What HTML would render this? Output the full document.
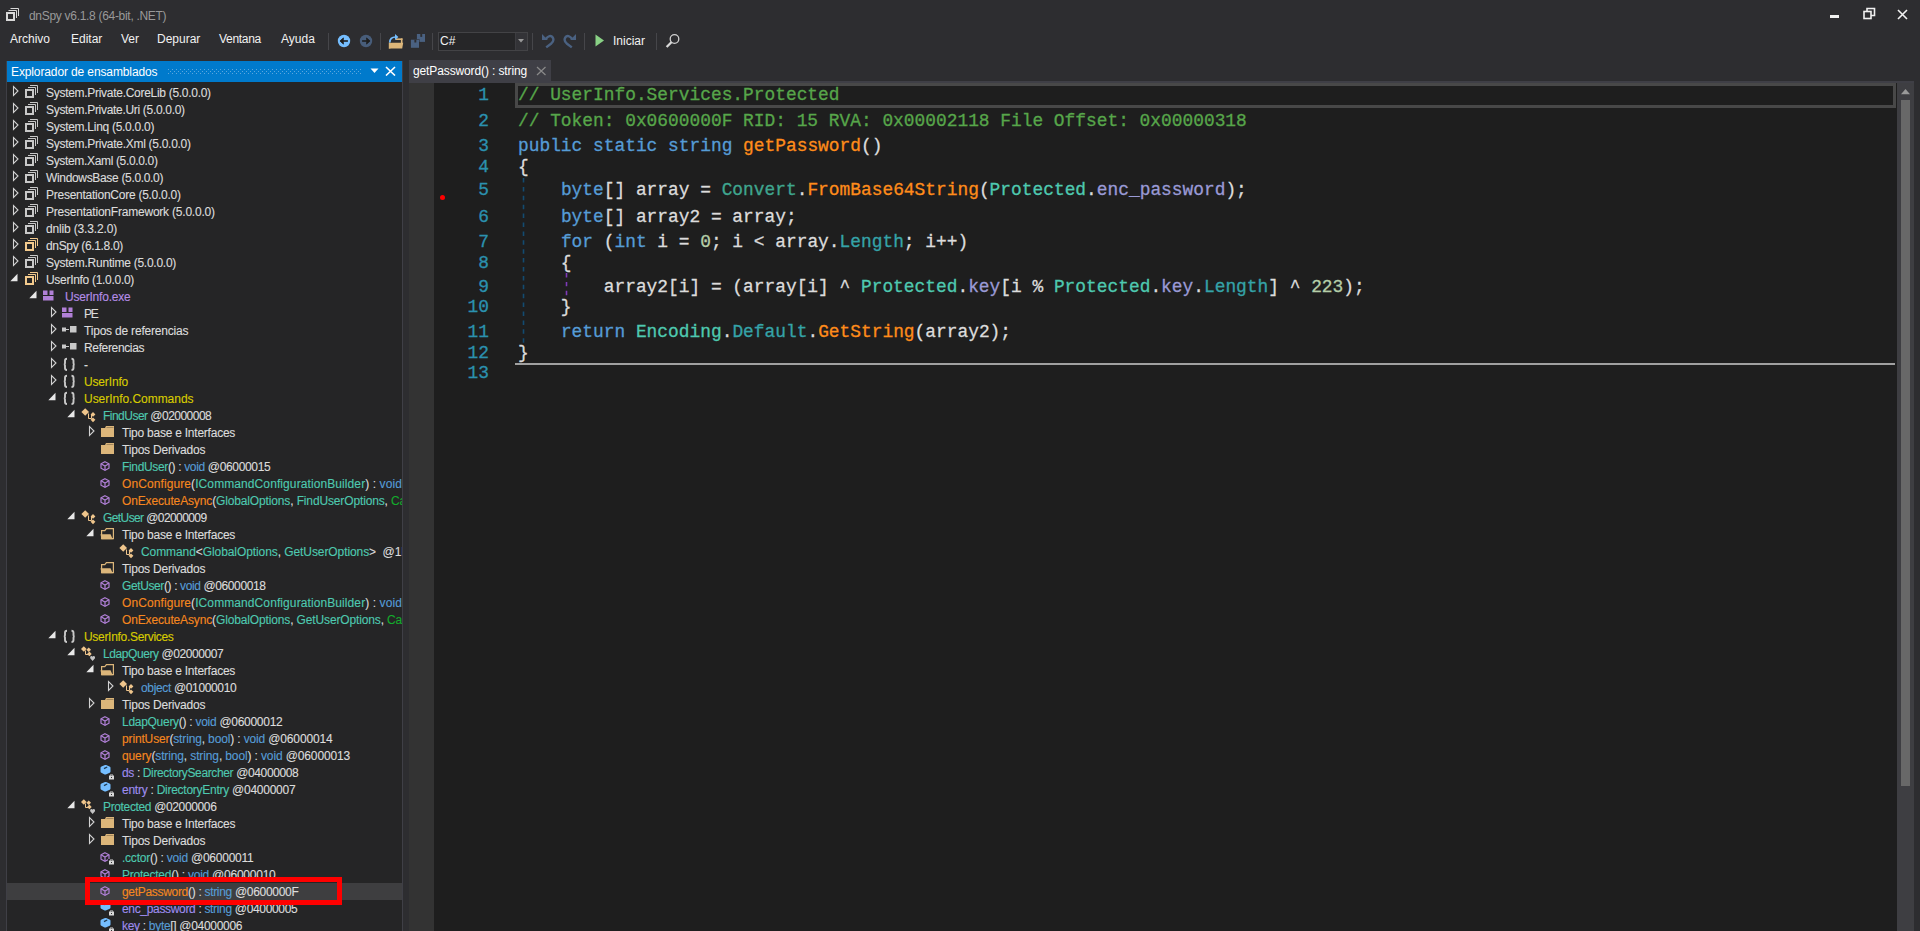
<!DOCTYPE html>
<html><head><meta charset="utf-8"><style>
*{margin:0;padding:0;box-sizing:border-box}
html,body{width:1920px;height:931px;overflow:hidden;background:#2d2d30;font-family:"Liberation Sans",sans-serif;font-size:12px;color:#f1f1f1}
.a{position:absolute}
.ic{position:absolute;top:0}
.row{position:absolute;left:7px;width:395px;height:17px;overflow:hidden}
.row.sel{background:#3e3e40}
.tt{position:absolute;top:0;-webkit-text-stroke:0.12px currentColor;line-height:17px;white-space:pre;padding-top:1px}
.ns{position:absolute;top:0;line-height:17px;color:#c8c8c8;font-size:12px;font-weight:bold;letter-spacing:1px}
.cl{position:absolute;left:518px;-webkit-text-stroke:0.3px currentColor;font-family:"Liberation Mono",monospace;font-size:17.87px;line-height:20px;white-space:pre;color:#dcdcdc}
.ln{position:absolute;-webkit-text-stroke:0.3px currentColor;left:440px;width:49px;text-align:right;font-family:"Liberation Mono",monospace;font-size:17.87px;line-height:20px;color:#2b91af}
.menu span{position:absolute;top:31px;line-height:16px;color:#f1f1f1}
.sep{position:absolute;top:33px;width:1px;height:17px;background:#46464a}
</style></head><body>
<!-- title bar -->
<svg class="a" style="left:5px;top:7px" width="15" height="15"><rect x="2" y="6" width="7" height="7" fill="none" stroke="#d8d8d8" stroke-width="2"/><path d="M3.5 3.5 H11.5 V11" fill="none" stroke="#d8d8d8" stroke-width="1"/><path d="M5.5 1.5 H13.5 V9" fill="none" stroke="#d8d8d8" stroke-width="1"/></svg>
<div class="a" style="left:29px;top:8px;line-height:16px;color:#999999;letter-spacing:-0.3px">dnSpy v6.1.8 (64-bit, .NET)</div>
<div class="a" style="left:1830px;top:15px;width:9px;height:3px;background:#f1f1f1"></div>
<svg class="a" style="left:1863px;top:7px" width="13" height="13"><rect x="1" y="4.5" width="7" height="7" fill="none" stroke="#f1f1f1" stroke-width="1.6"/><path d="M4 4.5 V1.5 H11.5 V8.5 H8" fill="none" stroke="#f1f1f1" stroke-width="1.6"/></svg>
<svg class="a" style="left:1897px;top:9px" width="12" height="11"><path d="M1 1 L10 10 M10 1 L1 10" stroke="#f1f1f1" stroke-width="1.6"/></svg>
<!-- menu -->
<div class="menu">
<span style="left:10px">Archivo</span><span style="left:71px">Editar</span><span style="left:121px">Ver</span><span style="left:157px">Depurar</span><span style="left:219px;letter-spacing:-0.3px">Ventana</span><span style="left:281px">Ayuda</span>
</div>
<div class="sep" style="left:328px"></div>
<svg class="a" style="left:337px;top:34px" width="14" height="14"><circle cx="7" cy="7" r="6.2" fill="#75beff"/><path d="M2.8 7 L6.6 3.5 V5.2 L5 7 L6.6 8.8 V10.5 Z" fill="#1e1e1e"/><path d="M2.8 7 L6.6 3.5 V10.5 Z" fill="#1e1e1e"/><rect x="5.5" y="6.2" width="5.4" height="1.6" fill="#1e1e1e"/></svg>
<svg class="a" style="left:359px;top:34px" width="14" height="14"><circle cx="7" cy="7" r="6.2" fill="#485d7a"/><g transform="translate(14,0) scale(-1,1)"><path d="M2.8 7 L6.6 3.5 V5.2 L5 7 L6.6 8.8 V10.5 Z" fill="#1e1e1e"/><path d="M2.8 7 L6.6 3.5 V10.5 Z" fill="#1e1e1e"/><rect x="5.5" y="6.2" width="5.4" height="1.6" fill="#1e1e1e"/></g></svg>
<div class="sep" style="left:380px"></div>
<svg class="a" style="left:388px;top:34px" width="17" height="16"><rect x="7.5" y="4.4" width="7" height="1.6" fill="#dcb67a"/><rect x="12.9" y="4.4" width="1.6" height="5" fill="#dcb67a"/><rect x="0.8" y="7.5" width="1.6" height="7" fill="#dcb67a"/><path d="M2.2 8.8 H15.2 L14.2 14.4 H0.8 Z" fill="#dcb67a"/><path d="M1.8 8.6 Q1.8 3 7.6 3" fill="none" stroke="#2d2d30" stroke-width="3.2"/><path d="M1.8 8.6 Q1.8 3 7.6 3" fill="none" stroke="#75beff" stroke-width="1.7"/><path d="M7 0 L10.4 3 L7 6 Z" fill="#75beff"/></svg>
<svg class="a" style="left:410px;top:33px" width="17" height="17"><path d="M6.9 1 H15 V8.9 H6.9 Z" fill="#4a6181"/><rect x="10.3" y="1" width="1.9" height="2.9" fill="#2d2d30"/><path d="M0.4 6.2 H9.5 V15.3 H0.4 Z" fill="#2d2d30"/><path d="M0.9 6.7 H9 V14.8 H0.9 Z" fill="#4a6181"/><rect x="4.4" y="6.7" width="1.9" height="2.8" fill="#2d2d30"/></svg>
<div class="sep" style="left:432px"></div>
<div class="a" style="left:438px;top:32px;width:90px;height:19px;border:1px solid #434346;background:#262628"></div>
<div class="a" style="left:515px;top:33px;width:12px;height:17px;background:#333337;border-left:1px solid #3c3c40"></div>
<svg class="a" style="left:518px;top:39px" width="8" height="5"><path d="M0 0 H6 L3 3.5 Z" fill="#999"/></svg>
<div class="a" style="left:440px;top:33px;line-height:16px;color:#f1f1f1">C#</div>
<div class="sep" style="left:532px"></div>
<svg class="a" style="left:540px;top:33px" width="16" height="16"><path d="M5.8 6 C8 3 11 1.8 12.7 4.5 C13.9 6.5 13.2 9 11 10.8 L6.2 14.4" fill="none" stroke="#4a6181" stroke-width="2.4"/><path d="M2 1.1 V6.9 H7.8 Z" fill="#4a6181"/></svg>
<svg class="a" style="left:562px;top:33px" width="16" height="16"><g transform="translate(16,0) scale(-1,1)"><path d="M5.8 6 C8 3 11 1.8 12.7 4.5 C13.9 6.5 13.2 9 11 10.8 L6.2 14.4" fill="none" stroke="#4a6181" stroke-width="2.4"/><path d="M2 1.1 V6.9 H7.8 Z" fill="#4a6181"/></g></svg>
<div class="sep" style="left:584px"></div>
<svg class="a" style="left:595px;top:34px" width="10" height="13"><path d="M0.5 0.5 V12.5 L9 6.5 Z" fill="#89d185"/></svg>
<div class="a" style="left:613px;top:33px;line-height:16px;color:#f1f1f1">Iniciar</div>
<div class="sep" style="left:656px"></div>
<svg class="a" style="left:665px;top:33px" width="16" height="16"><circle cx="9.5" cy="6" r="4.3" fill="none" stroke="#d0d0d0" stroke-width="1.3"/><path d="M6.6 9 L1.6 14" stroke="#d8d8d8" stroke-width="2.3"/></svg>

<!-- left panel -->
<div class="a" style="left:6px;top:61px;width:1px;height:870px;background:#3f3f46"></div>
<div class="a" style="left:7px;top:61px;width:395px;height:870px;background:#252526"></div>
<div class="a" style="left:402px;top:61px;width:1px;height:870px;background:#3f3f46"></div>
<div class="a" style="left:7px;top:61px;width:395px;height:21px;background:#007acc"></div>
<div class="a" style="left:11px;top:64px;line-height:16px;color:#ffffff;letter-spacing:-0.12px">Explorador de ensamblados</div>
<svg class="a" style="left:168px;top:69px" width="194" height="5"><defs><pattern id="grip" width="4" height="4" patternUnits="userSpaceOnUse"><rect x="0" y="0" width="1" height="1" fill="#5aa6de"/><rect x="2" y="2" width="1" height="1" fill="#5aa6de"/></pattern></defs><rect width="194" height="5" fill="url(#grip)"/></svg>
<svg class="a" style="left:370px;top:68px" width="10" height="6"><path d="M0.5 0.5 H8.5 L4.5 5 Z" fill="#ffffff"/></svg>
<svg class="a" style="left:385px;top:66px" width="11" height="10"><path d="M1 1 L10 9.5 M10 1 L1 9.5" stroke="#ffffff" stroke-width="1.6"/></svg>
<div class="row" style="top:84px"><svg class="ic" style="left:5px" width="8" height="17"><path d="M1.5 2.5 L1.5 11.5 L6 7 Z" fill="none" stroke="#d2d2d2" stroke-width="1.1"/></svg><svg class="ic" style="left:17px" width="15" height="17"><rect x="2" y="6" width="7" height="7" fill="none" stroke="#c8c8c8" stroke-width="2"/><path d="M4 3.5 H11.5 V11" fill="none" stroke="#c8c8c8" stroke-width="1"/><path d="M6 1.5 H13.5 V9" fill="none" stroke="#c8c8c8" stroke-width="1"/></svg><span class="tt" style="left:39px;letter-spacing:-0.290px"><span style="color:#dcdcdc">System.Private.CoreLib (5.0.0.0)</span></span></div><div class="row" style="top:101px"><svg class="ic" style="left:5px" width="8" height="17"><path d="M1.5 2.5 L1.5 11.5 L6 7 Z" fill="none" stroke="#d2d2d2" stroke-width="1.1"/></svg><svg class="ic" style="left:17px" width="15" height="17"><rect x="2" y="6" width="7" height="7" fill="none" stroke="#c8c8c8" stroke-width="2"/><path d="M4 3.5 H11.5 V11" fill="none" stroke="#c8c8c8" stroke-width="1"/><path d="M6 1.5 H13.5 V9" fill="none" stroke="#c8c8c8" stroke-width="1"/></svg><span class="tt" style="left:39px;letter-spacing:-0.306px"><span style="color:#dcdcdc">System.Private.Uri (5.0.0.0)</span></span></div><div class="row" style="top:118px"><svg class="ic" style="left:5px" width="8" height="17"><path d="M1.5 2.5 L1.5 11.5 L6 7 Z" fill="none" stroke="#d2d2d2" stroke-width="1.1"/></svg><svg class="ic" style="left:17px" width="15" height="17"><rect x="2" y="6" width="7" height="7" fill="none" stroke="#c8c8c8" stroke-width="2"/><path d="M4 3.5 H11.5 V11" fill="none" stroke="#c8c8c8" stroke-width="1"/><path d="M6 1.5 H13.5 V9" fill="none" stroke="#c8c8c8" stroke-width="1"/></svg><span class="tt" style="left:39px;letter-spacing:-0.284px"><span style="color:#dcdcdc">System.Linq (5.0.0.0)</span></span></div><div class="row" style="top:135px"><svg class="ic" style="left:5px" width="8" height="17"><path d="M1.5 2.5 L1.5 11.5 L6 7 Z" fill="none" stroke="#d2d2d2" stroke-width="1.1"/></svg><svg class="ic" style="left:17px" width="15" height="17"><rect x="2" y="6" width="7" height="7" fill="none" stroke="#c8c8c8" stroke-width="2"/><path d="M4 3.5 H11.5 V11" fill="none" stroke="#c8c8c8" stroke-width="1"/><path d="M6 1.5 H13.5 V9" fill="none" stroke="#c8c8c8" stroke-width="1"/></svg><span class="tt" style="left:39px;letter-spacing:-0.286px"><span style="color:#dcdcdc">System.Private.Xml (5.0.0.0)</span></span></div><div class="row" style="top:152px"><svg class="ic" style="left:5px" width="8" height="17"><path d="M1.5 2.5 L1.5 11.5 L6 7 Z" fill="none" stroke="#d2d2d2" stroke-width="1.1"/></svg><svg class="ic" style="left:17px" width="15" height="17"><rect x="2" y="6" width="7" height="7" fill="none" stroke="#c8c8c8" stroke-width="2"/><path d="M4 3.5 H11.5 V11" fill="none" stroke="#c8c8c8" stroke-width="1"/><path d="M6 1.5 H13.5 V9" fill="none" stroke="#c8c8c8" stroke-width="1"/></svg><span class="tt" style="left:39px;letter-spacing:-0.339px"><span style="color:#dcdcdc">System.Xaml (5.0.0.0)</span></span></div><div class="row" style="top:169px"><svg class="ic" style="left:5px" width="8" height="17"><path d="M1.5 2.5 L1.5 11.5 L6 7 Z" fill="none" stroke="#d2d2d2" stroke-width="1.1"/></svg><svg class="ic" style="left:17px" width="15" height="17"><rect x="2" y="6" width="7" height="7" fill="none" stroke="#c8c8c8" stroke-width="2"/><path d="M4 3.5 H11.5 V11" fill="none" stroke="#c8c8c8" stroke-width="1"/><path d="M6 1.5 H13.5 V9" fill="none" stroke="#c8c8c8" stroke-width="1"/></svg><span class="tt" style="left:39px;letter-spacing:-0.332px"><span style="color:#dcdcdc">WindowsBase (5.0.0.0)</span></span></div><div class="row" style="top:186px"><svg class="ic" style="left:5px" width="8" height="17"><path d="M1.5 2.5 L1.5 11.5 L6 7 Z" fill="none" stroke="#d2d2d2" stroke-width="1.1"/></svg><svg class="ic" style="left:17px" width="15" height="17"><rect x="2" y="6" width="7" height="7" fill="none" stroke="#c8c8c8" stroke-width="2"/><path d="M4 3.5 H11.5 V11" fill="none" stroke="#c8c8c8" stroke-width="1"/><path d="M6 1.5 H13.5 V9" fill="none" stroke="#c8c8c8" stroke-width="1"/></svg><span class="tt" style="left:39px;letter-spacing:-0.255px"><span style="color:#dcdcdc">PresentationCore (5.0.0.0)</span></span></div><div class="row" style="top:203px"><svg class="ic" style="left:5px" width="8" height="17"><path d="M1.5 2.5 L1.5 11.5 L6 7 Z" fill="none" stroke="#d2d2d2" stroke-width="1.1"/></svg><svg class="ic" style="left:17px" width="15" height="17"><rect x="2" y="6" width="7" height="7" fill="none" stroke="#c8c8c8" stroke-width="2"/><path d="M4 3.5 H11.5 V11" fill="none" stroke="#c8c8c8" stroke-width="1"/><path d="M6 1.5 H13.5 V9" fill="none" stroke="#c8c8c8" stroke-width="1"/></svg><span class="tt" style="left:39px;letter-spacing:-0.213px"><span style="color:#dcdcdc">PresentationFramework (5.0.0.0)</span></span></div><div class="row" style="top:220px"><svg class="ic" style="left:5px" width="8" height="17"><path d="M1.5 2.5 L1.5 11.5 L6 7 Z" fill="none" stroke="#d2d2d2" stroke-width="1.1"/></svg><svg class="ic" style="left:17px" width="15" height="17"><rect x="2" y="6" width="7" height="7" fill="none" stroke="#c8c8c8" stroke-width="2"/><path d="M4 3.5 H11.5 V11" fill="none" stroke="#c8c8c8" stroke-width="1"/><path d="M6 1.5 H13.5 V9" fill="none" stroke="#c8c8c8" stroke-width="1"/></svg><span class="tt" style="left:39px;letter-spacing:-0.159px"><span style="color:#dcdcdc">dnlib (3.3.2.0)</span></span></div><div class="row" style="top:237px"><svg class="ic" style="left:5px" width="8" height="17"><path d="M1.5 2.5 L1.5 11.5 L6 7 Z" fill="none" stroke="#d2d2d2" stroke-width="1.1"/></svg><svg class="ic" style="left:17px" width="15" height="17"><rect x="2" y="6" width="7" height="7" fill="none" stroke="#f2c98c" stroke-width="2"/><path d="M4 3.5 H11.5 V11" fill="none" stroke="#f2c98c" stroke-width="1"/><path d="M6 1.5 H13.5 V9" fill="none" stroke="#f2c98c" stroke-width="1"/></svg><span class="tt" style="left:39px;letter-spacing:-0.344px"><span style="color:#dcdcdc">dnSpy (6.1.8.0)</span></span></div><div class="row" style="top:254px"><svg class="ic" style="left:5px" width="8" height="17"><path d="M1.5 2.5 L1.5 11.5 L6 7 Z" fill="none" stroke="#d2d2d2" stroke-width="1.1"/></svg><svg class="ic" style="left:17px" width="15" height="17"><rect x="2" y="6" width="7" height="7" fill="none" stroke="#c8c8c8" stroke-width="2"/><path d="M4 3.5 H11.5 V11" fill="none" stroke="#c8c8c8" stroke-width="1"/><path d="M6 1.5 H13.5 V9" fill="none" stroke="#c8c8c8" stroke-width="1"/></svg><span class="tt" style="left:39px;letter-spacing:-0.248px"><span style="color:#dcdcdc">System.Runtime (5.0.0.0)</span></span></div><div class="row" style="top:271px"><svg class="ic" style="left:2.5px" width="9" height="17"><path d="M0.3 10.3 L7.5 10.3 L7.5 2.8 Z" fill="#e8e8e8"/></svg><svg class="ic" style="left:17px" width="15" height="17"><rect x="2" y="6" width="7" height="7" fill="none" stroke="#f2c98c" stroke-width="2"/><path d="M4 3.5 H11.5 V11" fill="none" stroke="#f2c98c" stroke-width="1"/><path d="M6 1.5 H13.5 V9" fill="none" stroke="#f2c98c" stroke-width="1"/></svg><span class="tt" style="left:39px;letter-spacing:-0.299px"><span style="color:#dcdcdc">UserInfo (1.0.0.0)</span></span></div><div class="row" style="top:288px"><svg class="ic" style="left:21.5px" width="9" height="17"><path d="M0.3 10.3 L7.5 10.3 L7.5 2.8 Z" fill="#e8e8e8"/></svg><svg class="ic" style="left:36px" width="14" height="17"><rect x="0" y="2.5" width="4.5" height="4.5" fill="#b180d7"/><rect x="6.5" y="2.5" width="4" height="4.5" fill="#b180d7"/><rect x="0" y="8" width="10.5" height="4.5" fill="#b180d7"/></svg><span class="tt" style="left:58px;letter-spacing:-0.212px"><span style="color:#b48ce6">UserInfo.exe</span></span></div><div class="row" style="top:305px"><svg class="ic" style="left:43px" width="8" height="17"><path d="M1.5 2.5 L1.5 11.5 L6 7 Z" fill="none" stroke="#d2d2d2" stroke-width="1.1"/></svg><svg class="ic" style="left:55px" width="14" height="17"><rect x="0" y="2.5" width="4.5" height="4.5" fill="#b180d7"/><rect x="6.5" y="2.5" width="4" height="4.5" fill="#b180d7"/><rect x="0" y="8" width="10.5" height="4.5" fill="#b180d7"/></svg><span class="tt" style="left:77px;letter-spacing:-1.308px"><span style="color:#dcdcdc">PE</span></span></div><div class="row" style="top:322px"><svg class="ic" style="left:43px" width="8" height="17"><path d="M1.5 2.5 L1.5 11.5 L6 7 Z" fill="none" stroke="#d2d2d2" stroke-width="1.1"/></svg><svg class="ic" style="left:55px" width="16" height="17"><rect x="0" y="5.5" width="4" height="4" fill="#c8c8c8"/><rect x="4" y="7" width="3" height="1" fill="#c8c8c8"/><rect x="8" y="4" width="6.5" height="6.5" fill="#c8c8c8"/></svg><span class="tt" style="left:77px;letter-spacing:-0.199px"><span style="color:#dcdcdc">Tipos de referencias</span></span></div><div class="row" style="top:339px"><svg class="ic" style="left:43px" width="8" height="17"><path d="M1.5 2.5 L1.5 11.5 L6 7 Z" fill="none" stroke="#d2d2d2" stroke-width="1.1"/></svg><svg class="ic" style="left:55px" width="16" height="17"><rect x="0" y="5.5" width="4" height="4" fill="#c8c8c8"/><rect x="4" y="7" width="3" height="1" fill="#c8c8c8"/><rect x="8" y="4" width="6.5" height="6.5" fill="#c8c8c8"/></svg><span class="tt" style="left:77px;letter-spacing:-0.357px"><span style="color:#dcdcdc">Referencias</span></span></div><div class="row" style="top:356px"><svg class="ic" style="left:43px" width="8" height="17"><path d="M1.5 2.5 L1.5 11.5 L6 7 Z" fill="none" stroke="#d2d2d2" stroke-width="1.1"/></svg><svg class="ic" style="left:55px" width="16" height="17"><path d="M5 2.8 Q3 2.8 3 4.8 V7.2 Q3 8.4 1.8 8.4 Q3 8.4 3 9.6 V12 Q3 14 5 14" fill="none" stroke="#c8c8c8" stroke-width="1.9"/><path d="M9.5 2.8 Q11.5 2.8 11.5 4.8 V7.2 Q11.5 8.4 12.7 8.4 Q11.5 8.4 11.5 9.6 V12 Q11.5 14 9.5 14" fill="none" stroke="#c8c8c8" stroke-width="1.9"/></svg><span class="tt" style="left:77px;letter-spacing:0.500px"><span style="color:#dcdcdc">-</span></span></div><div class="row" style="top:373px"><svg class="ic" style="left:43px" width="8" height="17"><path d="M1.5 2.5 L1.5 11.5 L6 7 Z" fill="none" stroke="#d2d2d2" stroke-width="1.1"/></svg><svg class="ic" style="left:55px" width="16" height="17"><path d="M5 2.8 Q3 2.8 3 4.8 V7.2 Q3 8.4 1.8 8.4 Q3 8.4 3 9.6 V12 Q3 14 5 14" fill="none" stroke="#c8c8c8" stroke-width="1.9"/><path d="M9.5 2.8 Q11.5 2.8 11.5 4.8 V7.2 Q11.5 8.4 12.7 8.4 Q11.5 8.4 11.5 9.6 V12 Q11.5 14 9.5 14" fill="none" stroke="#c8c8c8" stroke-width="1.9"/></svg><span class="tt" style="left:77px;letter-spacing:-0.157px"><span style="color:#d8cc00">UserInfo</span></span></div><div class="row" style="top:390px"><svg class="ic" style="left:40.5px" width="9" height="17"><path d="M0.3 10.3 L7.5 10.3 L7.5 2.8 Z" fill="#e8e8e8"/></svg><svg class="ic" style="left:55px" width="16" height="17"><path d="M5 2.8 Q3 2.8 3 4.8 V7.2 Q3 8.4 1.8 8.4 Q3 8.4 3 9.6 V12 Q3 14 5 14" fill="none" stroke="#c8c8c8" stroke-width="1.9"/><path d="M9.5 2.8 Q11.5 2.8 11.5 4.8 V7.2 Q11.5 8.4 12.7 8.4 Q11.5 8.4 11.5 9.6 V12 Q11.5 14 9.5 14" fill="none" stroke="#c8c8c8" stroke-width="1.9"/></svg><span class="tt" style="left:77px;letter-spacing:-0.032px"><span style="color:#d8cc00">UserInfo.Commands</span></span></div><div class="row" style="top:407px"><svg class="ic" style="left:59.5px" width="9" height="17"><path d="M0.3 10.3 L7.5 10.3 L7.5 2.8 Z" fill="#e8e8e8"/></svg><svg class="ic" style="left:74px" width="16" height="17"><path d="M4.2 1.2 L8 5 L4.2 8.8 L0.4 5 Z" fill="#efc58c"/><path d="M12 5 L14.4 7.4 L12 9.8 L9.6 7.4 Z" fill="#efc58c"/><path d="M12 10.4 L14.4 12.8 L12 15.2 L9.6 12.8 Z" fill="#efc58c"/><path d="M7.5 6.5 V11.5 H10.5 V7.5" fill="none" stroke="#efc58c" stroke-width="1"/></svg><span class="tt" style="left:96px;letter-spacing:-0.522px"><span style="color:#4ec9b0">FindUser</span><span style="color:#dcdcdc"> @02000008</span></span></div><div class="row" style="top:424px"><svg class="ic" style="left:81px" width="8" height="17"><path d="M1.5 2.5 L1.5 11.5 L6 7 Z" fill="none" stroke="#d2d2d2" stroke-width="1.1"/></svg><svg class="ic" style="left:93px" width="15" height="17"><path d="M1 4 H5 L6 2 H14 V13 H1 Z" fill="#dcb67a"/><rect x="6.5" y="3" width="7" height="1" fill="#3a3226" opacity="0.35"/></svg><span class="tt" style="left:115px;letter-spacing:-0.236px"><span style="color:#dcdcdc">Tipo base e Interfaces</span></span></div><div class="row" style="top:441px"><svg class="ic" style="left:93px" width="15" height="17"><path d="M1 4 H5 L6 2 H14 V13 H1 Z" fill="#dcb67a"/><rect x="6.5" y="3" width="7" height="1" fill="#3a3226" opacity="0.35"/></svg><span class="tt" style="left:115px;letter-spacing:-0.198px"><span style="color:#dcdcdc">Tipos Derivados</span></span></div><div class="row" style="top:458px"><svg class="ic" style="left:93px" width="16" height="17"><path d="M5 3.7 L9 5.8 V10.2 L5 12.3 L1 10.2 V5.8 Z" fill="none" stroke="#b180d7" stroke-width="1.2"/><path d="M1 5.8 L5 8 L9 5.8 M5 8 V12.3" fill="none" stroke="#b180d7" stroke-width="1.2"/></svg><span class="tt" style="left:115px;letter-spacing:-0.345px"><span style="color:#4ec9b0">FindUser</span><span style="color:#dcdcdc">() : </span><span style="color:#569cd6">void</span><span style="color:#dcdcdc"> @06000015</span></span></div><div class="row" style="top:475px"><svg class="ic" style="left:93px" width="16" height="17"><path d="M5 3.7 L9 5.8 V10.2 L5 12.3 L1 10.2 V5.8 Z" fill="none" stroke="#b180d7" stroke-width="1.2"/><path d="M1 5.8 L5 8 L9 5.8 M5 8 V12.3" fill="none" stroke="#b180d7" stroke-width="1.2"/></svg><span class="tt" style="left:115px;letter-spacing:0.094px"><span style="color:#f5871f">OnConfigure</span><span style="color:#dcdcdc">(</span><span style="color:#4ec9b0">ICommandConfigurationBuilder</span><span style="color:#dcdcdc">) : </span><span style="color:#569cd6">void</span><span style="color:#dcdcdc"> @06000016</span></span></div><div class="row" style="top:492px"><svg class="ic" style="left:93px" width="16" height="17"><path d="M5 3.7 L9 5.8 V10.2 L5 12.3 L1 10.2 V5.8 Z" fill="none" stroke="#b180d7" stroke-width="1.2"/><path d="M1 5.8 L5 8 L9 5.8 M5 8 V12.3" fill="none" stroke="#b180d7" stroke-width="1.2"/></svg><span class="tt" style="left:115px;letter-spacing:-0.138px"><span style="color:#f5871f">OnExecuteAsync</span><span style="color:#dcdcdc">(</span><span style="color:#4ec9b0">GlobalOptions</span><span style="color:#dcdcdc">, </span><span style="color:#4ec9b0">FindUserOptions</span><span style="color:#dcdcdc">, </span><span style="color:#14ab2c">CancellationToken</span><span style="color:#dcdcdc">) : </span></span></div><div class="row" style="top:509px"><svg class="ic" style="left:59.5px" width="9" height="17"><path d="M0.3 10.3 L7.5 10.3 L7.5 2.8 Z" fill="#e8e8e8"/></svg><svg class="ic" style="left:74px" width="16" height="17"><path d="M4.2 1.2 L8 5 L4.2 8.8 L0.4 5 Z" fill="#efc58c"/><path d="M12 5 L14.4 7.4 L12 9.8 L9.6 7.4 Z" fill="#efc58c"/><path d="M12 10.4 L14.4 12.8 L12 15.2 L9.6 12.8 Z" fill="#efc58c"/><path d="M7.5 6.5 V11.5 H10.5 V7.5" fill="none" stroke="#efc58c" stroke-width="1"/></svg><span class="tt" style="left:96px;letter-spacing:-0.594px"><span style="color:#4ec9b0">GetUser</span><span style="color:#dcdcdc"> @02000009</span></span></div><div class="row" style="top:526px"><svg class="ic" style="left:78.5px" width="9" height="17"><path d="M0.3 10.3 L7.5 10.3 L7.5 2.8 Z" fill="#e8e8e8"/></svg><svg class="ic" style="left:93px" width="15" height="17"><path d="M1.6 12.6 V4.6 H4.8 L6.4 2.6 H13.4 V12.6 Z" fill="none" stroke="#dcb67a" stroke-width="1.2"/><path d="M0.5 8.3 H10.5 L12.8 13.2 H1.6 Z" fill="#dcb67a"/></svg><span class="tt" style="left:115px;letter-spacing:-0.236px"><span style="color:#dcdcdc">Tipo base e Interfaces</span></span></div><div class="row" style="top:543px"><svg class="ic" style="left:112px" width="16" height="17"><path d="M4.2 1.2 L8 5 L4.2 8.8 L0.4 5 Z" fill="#efc58c"/><path d="M12 5 L14.4 7.4 L12 9.8 L9.6 7.4 Z" fill="#efc58c"/><path d="M12 10.4 L14.4 12.8 L12 15.2 L9.6 12.8 Z" fill="#efc58c"/><path d="M7.5 6.5 V11.5 H10.5 V7.5" fill="none" stroke="#efc58c" stroke-width="1"/></svg><span class="tt" style="left:134px;letter-spacing:-0.082px"><span style="color:#4ec9b0">Command</span><span style="color:#dcdcdc">&lt;</span><span style="color:#4ec9b0">GlobalOptions</span><span style="color:#dcdcdc">, </span><span style="color:#4ec9b0">GetUserOptions</span><span style="color:#dcdcdc">&gt;</span><span style="color:#dcdcdc">  @1E000001</span></span></div><div class="row" style="top:560px"><svg class="ic" style="left:93px" width="15" height="17"><path d="M1.6 12.6 V4.6 H4.8 L6.4 2.6 H13.4 V12.6 Z" fill="none" stroke="#dcb67a" stroke-width="1.2"/><path d="M0.5 8.3 H10.5 L12.8 13.2 H1.6 Z" fill="#dcb67a"/></svg><span class="tt" style="left:115px;letter-spacing:-0.198px"><span style="color:#dcdcdc">Tipos Derivados</span></span></div><div class="row" style="top:577px"><svg class="ic" style="left:93px" width="16" height="17"><path d="M5 3.7 L9 5.8 V10.2 L5 12.3 L1 10.2 V5.8 Z" fill="none" stroke="#b180d7" stroke-width="1.2"/><path d="M1 5.8 L5 8 L9 5.8 M5 8 V12.3" fill="none" stroke="#b180d7" stroke-width="1.2"/></svg><span class="tt" style="left:115px;letter-spacing:-0.389px"><span style="color:#4ec9b0">GetUser</span><span style="color:#dcdcdc">() : </span><span style="color:#569cd6">void</span><span style="color:#dcdcdc"> @06000018</span></span></div><div class="row" style="top:594px"><svg class="ic" style="left:93px" width="16" height="17"><path d="M5 3.7 L9 5.8 V10.2 L5 12.3 L1 10.2 V5.8 Z" fill="none" stroke="#b180d7" stroke-width="1.2"/><path d="M1 5.8 L5 8 L9 5.8 M5 8 V12.3" fill="none" stroke="#b180d7" stroke-width="1.2"/></svg><span class="tt" style="left:115px;letter-spacing:0.094px"><span style="color:#f5871f">OnConfigure</span><span style="color:#dcdcdc">(</span><span style="color:#4ec9b0">ICommandConfigurationBuilder</span><span style="color:#dcdcdc">) : </span><span style="color:#569cd6">void</span><span style="color:#dcdcdc"> @06000019</span></span></div><div class="row" style="top:611px"><svg class="ic" style="left:93px" width="16" height="17"><path d="M5 3.7 L9 5.8 V10.2 L5 12.3 L1 10.2 V5.8 Z" fill="none" stroke="#b180d7" stroke-width="1.2"/><path d="M1 5.8 L5 8 L9 5.8 M5 8 V12.3" fill="none" stroke="#b180d7" stroke-width="1.2"/></svg><span class="tt" style="left:115px;letter-spacing:-0.140px"><span style="color:#f5871f">OnExecuteAsync</span><span style="color:#dcdcdc">(</span><span style="color:#4ec9b0">GlobalOptions</span><span style="color:#dcdcdc">, </span><span style="color:#4ec9b0">GetUserOptions</span><span style="color:#dcdcdc">, </span><span style="color:#14ab2c">CancellationToken</span><span style="color:#dcdcdc">) : </span></span></div><div class="row" style="top:628px"><svg class="ic" style="left:40.5px" width="9" height="17"><path d="M0.3 10.3 L7.5 10.3 L7.5 2.8 Z" fill="#e8e8e8"/></svg><svg class="ic" style="left:55px" width="16" height="17"><path d="M5 2.8 Q3 2.8 3 4.8 V7.2 Q3 8.4 1.8 8.4 Q3 8.4 3 9.6 V12 Q3 14 5 14" fill="none" stroke="#c8c8c8" stroke-width="1.9"/><path d="M9.5 2.8 Q11.5 2.8 11.5 4.8 V7.2 Q11.5 8.4 12.7 8.4 Q11.5 8.4 11.5 9.6 V12 Q11.5 14 9.5 14" fill="none" stroke="#c8c8c8" stroke-width="1.9"/></svg><span class="tt" style="left:77px;letter-spacing:-0.306px"><span style="color:#d8cc00">UserInfo.Services</span></span></div><div class="row" style="top:645px"><svg class="ic" style="left:59.5px" width="9" height="17"><path d="M0.3 10.3 L7.5 10.3 L7.5 2.8 Z" fill="#e8e8e8"/></svg><svg class="ic" style="left:74px" width="16" height="17"><path d="M2.8 1.2 L5.6 4 L2.8 6.8 L0 4 Z" fill="#efc58c"/><path d="M7.7 2.4 L10 4.7 L7.7 7 L5.4 4.7 Z" fill="#efc58c"/><path d="M8.4 6.6 L10.7 8.9 L8.4 11.2 L6.1 8.9 Z" fill="#efc58c"/><path d="M4.5 5.5 V9.5 H7" fill="none" stroke="#efc58c" stroke-width="1"/><path d="M11.6 16 L9.2 13.2 Q8.6 11.2 10.3 10.9 Q11.3 10.8 11.6 11.8 Q11.9 10.8 12.9 10.9 Q14.6 11.2 14 13.2 Z" fill="#c4c4c4"/></svg><span class="tt" style="left:96px;letter-spacing:-0.420px"><span style="color:#4ec9b0">LdapQuery</span><span style="color:#dcdcdc"> @02000007</span></span></div><div class="row" style="top:662px"><svg class="ic" style="left:78.5px" width="9" height="17"><path d="M0.3 10.3 L7.5 10.3 L7.5 2.8 Z" fill="#e8e8e8"/></svg><svg class="ic" style="left:93px" width="15" height="17"><path d="M1.6 12.6 V4.6 H4.8 L6.4 2.6 H13.4 V12.6 Z" fill="none" stroke="#dcb67a" stroke-width="1.2"/><path d="M0.5 8.3 H10.5 L12.8 13.2 H1.6 Z" fill="#dcb67a"/></svg><span class="tt" style="left:115px;letter-spacing:-0.236px"><span style="color:#dcdcdc">Tipo base e Interfaces</span></span></div><div class="row" style="top:679px"><svg class="ic" style="left:100px" width="8" height="17"><path d="M1.5 2.5 L1.5 11.5 L6 7 Z" fill="none" stroke="#d2d2d2" stroke-width="1.1"/></svg><svg class="ic" style="left:112px" width="16" height="17"><path d="M4.2 1.2 L8 5 L4.2 8.8 L0.4 5 Z" fill="#efc58c"/><path d="M12 5 L14.4 7.4 L12 9.8 L9.6 7.4 Z" fill="#efc58c"/><path d="M12 10.4 L14.4 12.8 L12 15.2 L9.6 12.8 Z" fill="#efc58c"/><path d="M7.5 6.5 V11.5 H10.5 V7.5" fill="none" stroke="#efc58c" stroke-width="1"/></svg><span class="tt" style="left:134px;letter-spacing:-0.352px"><span style="color:#569cd6">object</span><span style="color:#dcdcdc"> @01000010</span></span></div><div class="row" style="top:696px"><svg class="ic" style="left:81px" width="8" height="17"><path d="M1.5 2.5 L1.5 11.5 L6 7 Z" fill="none" stroke="#d2d2d2" stroke-width="1.1"/></svg><svg class="ic" style="left:93px" width="15" height="17"><path d="M1 4 H5 L6 2 H14 V13 H1 Z" fill="#dcb67a"/><rect x="6.5" y="3" width="7" height="1" fill="#3a3226" opacity="0.35"/></svg><span class="tt" style="left:115px;letter-spacing:-0.198px"><span style="color:#dcdcdc">Tipos Derivados</span></span></div><div class="row" style="top:713px"><svg class="ic" style="left:93px" width="16" height="17"><path d="M5 3.7 L9 5.8 V10.2 L5 12.3 L1 10.2 V5.8 Z" fill="none" stroke="#b180d7" stroke-width="1.2"/><path d="M1 5.8 L5 8 L9 5.8 M5 8 V12.3" fill="none" stroke="#b180d7" stroke-width="1.2"/></svg><span class="tt" style="left:115px;letter-spacing:-0.282px"><span style="color:#4ec9b0">LdapQuery</span><span style="color:#dcdcdc">() : </span><span style="color:#569cd6">void</span><span style="color:#dcdcdc"> @06000012</span></span></div><div class="row" style="top:730px"><svg class="ic" style="left:93px" width="16" height="17"><path d="M5 3.7 L9 5.8 V10.2 L5 12.3 L1 10.2 V5.8 Z" fill="none" stroke="#b180d7" stroke-width="1.2"/><path d="M1 5.8 L5 8 L9 5.8 M5 8 V12.3" fill="none" stroke="#b180d7" stroke-width="1.2"/></svg><span class="tt" style="left:115px;letter-spacing:-0.145px"><span style="color:#f5871f">printUser</span><span style="color:#dcdcdc">(</span><span style="color:#569cd6">string</span><span style="color:#dcdcdc">, </span><span style="color:#569cd6">bool</span><span style="color:#dcdcdc">) : </span><span style="color:#569cd6">void</span><span style="color:#dcdcdc"> @06000014</span></span></div><div class="row" style="top:747px"><svg class="ic" style="left:93px" width="16" height="17"><path d="M5 3.7 L9 5.8 V10.2 L5 12.3 L1 10.2 V5.8 Z" fill="none" stroke="#b180d7" stroke-width="1.2"/><path d="M1 5.8 L5 8 L9 5.8 M5 8 V12.3" fill="none" stroke="#b180d7" stroke-width="1.2"/></svg><span class="tt" style="left:115px;letter-spacing:-0.127px"><span style="color:#f5871f">query</span><span style="color:#dcdcdc">(</span><span style="color:#569cd6">string</span><span style="color:#dcdcdc">, </span><span style="color:#569cd6">string</span><span style="color:#dcdcdc">, </span><span style="color:#569cd6">bool</span><span style="color:#dcdcdc">) : </span><span style="color:#569cd6">void</span><span style="color:#dcdcdc"> @06000013</span></span></div><div class="row" style="top:764px"><svg class="ic" style="left:93px" width="16" height="17"><path d="M0.5 4 Q0.5 3 1.5 2.6 L5 1 Q5.6 0.8 6.2 1 L9.5 2.4 Q10.5 2.8 10.5 3.8 V7.6 Q10.5 8.4 9.7 8.8 L5.8 10.4 Q5.2 10.6 4.6 10.4 L1.3 8.8 Q0.5 8.4 0.5 7.6 Z" fill="#75beff"/><path d="M4 4.6 L7.2 3" stroke="#1e3a52" stroke-width="1.3"/><rect x="8" y="10" width="7" height="7" fill="#252526"/><path d="M10 12 V11 H13 V12" fill="none" stroke="#d8d8d8" stroke-width="1"/><rect x="9" y="12" width="5" height="3.5" fill="#d8d8d8"/><rect x="11" y="13" width="1" height="1" fill="#333"/></svg><span class="tt" style="left:115px;letter-spacing:-0.372px"><span style="color:#9e8cee">ds</span><span style="color:#dcdcdc"> : </span><span style="color:#4ec9b0">DirectorySearcher</span><span style="color:#dcdcdc"> @04000008</span></span></div><div class="row" style="top:781px"><svg class="ic" style="left:93px" width="16" height="17"><path d="M0.5 4 Q0.5 3 1.5 2.6 L5 1 Q5.6 0.8 6.2 1 L9.5 2.4 Q10.5 2.8 10.5 3.8 V7.6 Q10.5 8.4 9.7 8.8 L5.8 10.4 Q5.2 10.6 4.6 10.4 L1.3 8.8 Q0.5 8.4 0.5 7.6 Z" fill="#75beff"/><path d="M4 4.6 L7.2 3" stroke="#1e3a52" stroke-width="1.3"/><rect x="8" y="10" width="7" height="7" fill="#252526"/><path d="M10 12 V11 H13 V12" fill="none" stroke="#d8d8d8" stroke-width="1"/><rect x="9" y="12" width="5" height="3.5" fill="#d8d8d8"/><rect x="11" y="13" width="1" height="1" fill="#333"/></svg><span class="tt" style="left:115px;letter-spacing:-0.260px"><span style="color:#9e8cee">entry</span><span style="color:#dcdcdc"> : </span><span style="color:#4ec9b0">DirectoryEntry</span><span style="color:#dcdcdc"> @04000007</span></span></div><div class="row" style="top:798px"><svg class="ic" style="left:59.5px" width="9" height="17"><path d="M0.3 10.3 L7.5 10.3 L7.5 2.8 Z" fill="#e8e8e8"/></svg><svg class="ic" style="left:74px" width="16" height="17"><path d="M2.8 1.2 L5.6 4 L2.8 6.8 L0 4 Z" fill="#efc58c"/><path d="M7.7 2.4 L10 4.7 L7.7 7 L5.4 4.7 Z" fill="#efc58c"/><path d="M8.4 6.6 L10.7 8.9 L8.4 11.2 L6.1 8.9 Z" fill="#efc58c"/><path d="M4.5 5.5 V9.5 H7" fill="none" stroke="#efc58c" stroke-width="1"/><path d="M11.6 16 L9.2 13.2 Q8.6 11.2 10.3 10.9 Q11.3 10.8 11.6 11.8 Q11.9 10.8 12.9 10.9 Q14.6 11.2 14 13.2 Z" fill="#c4c4c4"/></svg><span class="tt" style="left:96px;letter-spacing:-0.357px"><span style="color:#4ec9b0">Protected</span><span style="color:#dcdcdc"> @02000006</span></span></div><div class="row" style="top:815px"><svg class="ic" style="left:81px" width="8" height="17"><path d="M1.5 2.5 L1.5 11.5 L6 7 Z" fill="none" stroke="#d2d2d2" stroke-width="1.1"/></svg><svg class="ic" style="left:93px" width="15" height="17"><path d="M1 4 H5 L6 2 H14 V13 H1 Z" fill="#dcb67a"/><rect x="6.5" y="3" width="7" height="1" fill="#3a3226" opacity="0.35"/></svg><span class="tt" style="left:115px;letter-spacing:-0.227px"><span style="color:#dcdcdc">Tipo base e Interfaces</span></span></div><div class="row" style="top:832px"><svg class="ic" style="left:81px" width="8" height="17"><path d="M1.5 2.5 L1.5 11.5 L6 7 Z" fill="none" stroke="#d2d2d2" stroke-width="1.1"/></svg><svg class="ic" style="left:93px" width="15" height="17"><path d="M1 4 H5 L6 2 H14 V13 H1 Z" fill="#dcb67a"/><rect x="6.5" y="3" width="7" height="1" fill="#3a3226" opacity="0.35"/></svg><span class="tt" style="left:115px;letter-spacing:-0.198px"><span style="color:#dcdcdc">Tipos Derivados</span></span></div><div class="row" style="top:849px"><svg class="ic" style="left:93px" width="16" height="17"><path d="M5 3.7 L9 5.8 V10.2 L5 12.3 L1 10.2 V5.8 Z" fill="none" stroke="#b180d7" stroke-width="1.2"/><path d="M1 5.8 L5 8 L9 5.8 M5 8 V12.3" fill="none" stroke="#b180d7" stroke-width="1.2"/><rect x="8" y="10" width="7" height="7" fill="#252526"/><path d="M10 12 V11 H13 V12" fill="none" stroke="#d8d8d8" stroke-width="1"/><rect x="9" y="12" width="5" height="3.5" fill="#d8d8d8"/><rect x="11" y="13" width="1" height="1" fill="#333"/></svg><span class="tt" style="left:115px;letter-spacing:-0.235px"><span style="color:#4ec9b0">.cctor</span><span style="color:#dcdcdc">() : </span><span style="color:#569cd6">void</span><span style="color:#dcdcdc"> @06000011</span></span></div><div class="row" style="top:866px"><svg class="ic" style="left:93px" width="16" height="17"><path d="M5 3.7 L9 5.8 V10.2 L5 12.3 L1 10.2 V5.8 Z" fill="none" stroke="#b180d7" stroke-width="1.2"/><path d="M1 5.8 L5 8 L9 5.8 M5 8 V12.3" fill="none" stroke="#b180d7" stroke-width="1.2"/></svg><span class="tt" style="left:115px;letter-spacing:-0.243px"><span style="color:#4ec9b0">Protected</span><span style="color:#dcdcdc">() : </span><span style="color:#569cd6">void</span><span style="color:#dcdcdc"> @06000010</span></span></div><div class="row sel" style="top:883px"><svg class="ic" style="left:93px" width="16" height="17"><path d="M5 3.7 L9 5.8 V10.2 L5 12.3 L1 10.2 V5.8 Z" fill="none" stroke="#b180d7" stroke-width="1.2"/><path d="M1 5.8 L5 8 L9 5.8 M5 8 V12.3" fill="none" stroke="#b180d7" stroke-width="1.2"/></svg><span class="tt" style="left:115px;letter-spacing:-0.309px"><span style="color:#f5871f">getPassword</span><span style="color:#dcdcdc">() : </span><span style="color:#569cd6">string</span><span style="color:#dcdcdc"> @0600000F</span></span></div><div class="row" style="top:900px"><svg class="ic" style="left:93px" width="16" height="17"><path d="M0.5 4 Q0.5 3 1.5 2.6 L5 1 Q5.6 0.8 6.2 1 L9.5 2.4 Q10.5 2.8 10.5 3.8 V7.6 Q10.5 8.4 9.7 8.8 L5.8 10.4 Q5.2 10.6 4.6 10.4 L1.3 8.8 Q0.5 8.4 0.5 7.6 Z" fill="#75beff"/><path d="M4 4.6 L7.2 3" stroke="#1e3a52" stroke-width="1.3"/><rect x="8" y="10" width="7" height="7" fill="#252526"/><path d="M10 12 V11 H13 V12" fill="none" stroke="#d8d8d8" stroke-width="1"/><rect x="9" y="12" width="5" height="3.5" fill="#d8d8d8"/><rect x="11" y="13" width="1" height="1" fill="#333"/></svg><span class="tt" style="left:115px;letter-spacing:-0.331px"><span style="color:#9e8cee">enc_password</span><span style="color:#dcdcdc"> : </span><span style="color:#569cd6">string</span><span style="color:#dcdcdc"> @04000005</span></span></div><div class="row" style="top:917px"><svg class="ic" style="left:93px" width="16" height="17"><path d="M0.5 4 Q0.5 3 1.5 2.6 L5 1 Q5.6 0.8 6.2 1 L9.5 2.4 Q10.5 2.8 10.5 3.8 V7.6 Q10.5 8.4 9.7 8.8 L5.8 10.4 Q5.2 10.6 4.6 10.4 L1.3 8.8 Q0.5 8.4 0.5 7.6 Z" fill="#75beff"/><path d="M4 4.6 L7.2 3" stroke="#1e3a52" stroke-width="1.3"/><rect x="8" y="10" width="7" height="7" fill="#252526"/><path d="M10 12 V11 H13 V12" fill="none" stroke="#d8d8d8" stroke-width="1"/><rect x="9" y="12" width="5" height="3.5" fill="#d8d8d8"/><rect x="11" y="13" width="1" height="1" fill="#333"/></svg><span class="tt" style="left:115px;letter-spacing:-0.308px"><span style="color:#9e8cee">key</span><span style="color:#dcdcdc"> : </span><span style="color:#569cd6">byte</span><span style="color:#dcdcdc">[]</span><span style="color:#dcdcdc"> @04000006</span></span></div>
<div class="a" style="left:85px;top:877px;width:257px;height:28px;border:5px solid #ff0000"></div>

<!-- editor -->
<div class="a" style="left:409px;top:60px;width:142px;height:23px;background:#3f3f46"></div>
<div class="a" style="left:413px;top:63px;line-height:16px;color:#ffffff;letter-spacing:-0.12px">getPassword() : string</div>
<svg class="a" style="left:536px;top:66px" width="11" height="10"><path d="M1 1 L9.5 9 M9.5 1 L1 9" stroke="#8a8a8a" stroke-width="1.2"/></svg>
<div class="a" style="left:409px;top:81px;width:1505px;height:2px;background:#3f3f46"></div>
<div class="a" style="left:409px;top:83px;width:25px;height:848px;background:#333333"></div>
<div class="a" style="left:434px;top:83px;width:1463px;height:848px;background:#1e1e1e"></div>
<div class="a" style="left:515px;top:83px;width:1381px;height:25px;border:3px solid #484848"></div>
<div class="a" style="left:515px;top:363px;width:1380px;height:2px;background:#a0a0a0"></div>
<svg class="a" style="left:522px;top:178px" width="3" height="170"><path d="M1.5 0 V170" stroke="#134b70" stroke-width="1.6" stroke-dasharray="4.5 4.4"/></svg>
<svg class="a" style="left:565px;top:272.8px" width="3" height="23"><path d="M1.5 0 V23" stroke="#7e3ab8" stroke-width="1.6" stroke-dasharray="4.4 4.5"/></svg>
<div class="a" style="left:439.5px;top:194.5px;width:5px;height:5px;border-radius:50%;background:#ff0000"></div>
<div class="cl" style="top:85px"><span style="color:#57a64a">// UserInfo.Services.Protected</span></div><div class="ln" style="top:85px">1</div><div class="cl" style="top:111px"><span style="color:#57a64a">// Token: 0x0600000F RID: 15 RVA: 0x00002118 File Offset: 0x00000318</span></div><div class="ln" style="top:111px">2</div><div class="cl" style="top:136px"><span style="color:#569cd6">public</span><span style="color:#dcdcdc"> </span><span style="color:#569cd6">static</span><span style="color:#dcdcdc"> </span><span style="color:#569cd6">string</span><span style="color:#dcdcdc"> </span><span style="color:#ff8c1a">getPassword</span><span style="color:#dcdcdc">()</span></div><div class="ln" style="top:136px">3</div><div class="cl" style="top:157px"><span style="color:#dcdcdc">{</span></div><div class="ln" style="top:157px">4</div><div class="cl" style="top:180px"><span style="color:#dcdcdc">    </span><span style="color:#569cd6">byte</span><span style="color:#dcdcdc">[] array = </span><span style="color:#3fa58e">Convert</span><span style="color:#dcdcdc">.</span><span style="color:#ff8c1a">FromBase64String</span><span style="color:#dcdcdc">(</span><span style="color:#4ec9b0">Protected</span><span style="color:#dcdcdc">.</span><span style="color:#9a9ad6">enc_password</span><span style="color:#dcdcdc">);</span></div><div class="ln" style="top:180px">5</div><div class="cl" style="top:207px"><span style="color:#dcdcdc">    </span><span style="color:#569cd6">byte</span><span style="color:#dcdcdc">[] array2 = array;</span></div><div class="ln" style="top:207px">6</div><div class="cl" style="top:232px"><span style="color:#dcdcdc">    </span><span style="color:#569cd6">for</span><span style="color:#dcdcdc"> (</span><span style="color:#569cd6">int</span><span style="color:#dcdcdc"> i = </span><span style="color:#b5cea8">0</span><span style="color:#dcdcdc">; i &lt; array.</span><span style="color:#35a3a8">Length</span><span style="color:#dcdcdc">; i++)</span></div><div class="ln" style="top:232px">7</div><div class="cl" style="top:253px"><span style="color:#dcdcdc">    {</span></div><div class="ln" style="top:253px">8</div><div class="cl" style="top:276.5px"><span style="color:#dcdcdc">        array2[i] = (array[i] ^ </span><span style="color:#4ec9b0">Protected</span><span style="color:#dcdcdc">.</span><span style="color:#9a9ad6">key</span><span style="color:#dcdcdc">[i % </span><span style="color:#4ec9b0">Protected</span><span style="color:#dcdcdc">.</span><span style="color:#9a9ad6">key</span><span style="color:#dcdcdc">.</span><span style="color:#35a3a8">Length</span><span style="color:#dcdcdc">] ^ </span><span style="color:#b5cea8">223</span><span style="color:#dcdcdc">);</span></div><div class="ln" style="top:276.5px">9</div><div class="cl" style="top:297px"><span style="color:#dcdcdc">    }</span></div><div class="ln" style="top:297px">10</div><div class="cl" style="top:321.5px"><span style="color:#dcdcdc">    </span><span style="color:#569cd6">return</span><span style="color:#dcdcdc"> </span><span style="color:#4ec9b0">Encoding</span><span style="color:#dcdcdc">.</span><span style="color:#35a3a8">Default</span><span style="color:#dcdcdc">.</span><span style="color:#ff8c1a">GetString</span><span style="color:#dcdcdc">(array2);</span></div><div class="ln" style="top:321.5px">11</div><div class="cl" style="top:342.5px"><span style="color:#dcdcdc">}</span></div><div class="ln" style="top:342.5px">12</div><div class="cl" style="top:362.5px"></div><div class="ln" style="top:362.5px">13</div>
<!-- scrollbar -->
<div class="a" style="left:1897px;top:83px;width:17px;height:848px;background:#3e3e42"></div>
<svg class="a" style="left:1900px;top:88px" width="11" height="8"><path d="M1 6.2 L5.5 1 L10 6.2 Z" fill="#999999"/></svg>
<div class="a" style="left:1901px;top:100px;width:9px;height:686px;background:#686868"></div>
</body></html>
